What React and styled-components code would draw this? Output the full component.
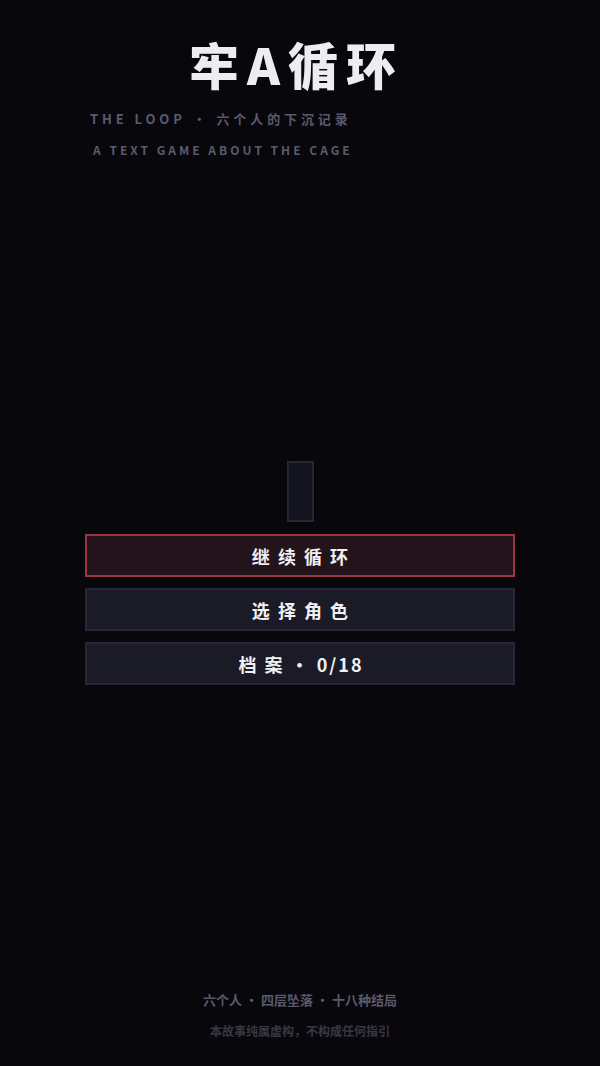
import React from "react";
import styled, { createGlobalStyle } from "styled-components";

const GlobalStyle = createGlobalStyle`
  html, body {
    margin: 0;
    padding: 0;
    background: #08070c;
  }
  body {
    font-family: "Noto Sans CJK SC", "Noto Sans", sans-serif;
  }
`;

const Page = styled.div`
  width: 600px;
  height: 1066px;
  box-sizing: border-box;
  display: flex;
  flex-direction: column;
  background: #08070c;
  color: #ececf2;
  overflow: hidden;
`;

const Header = styled.header`
  padding-top: 32px;
  display: flex;
  flex-direction: column;
`;

const Title = styled.h1`
  margin: 0 0 0 189px;
  font-size: 50px;
  font-weight: 900;
  letter-spacing: 8px;
  line-height: 62px;
  color: #ececf2;
`;

const Sub = styled.div`
  margin-left: ${(p) => p.$indent}px;
  margin-top: ${(p) => p.$top}px;
  font-size: ${(p) => p.$size}px;
  font-weight: 700;
  letter-spacing: ${(p) => p.$spacing}px;
  line-height: 18px;
  color: #5a5a6c;
  white-space: nowrap;
`;

const Middle = styled.main`
  flex: 1;
  display: flex;
  flex-direction: column;
  align-items: center;
  padding-top: 302px;
`;

const Slot = styled.div`
  width: 27px;
  height: 61px;
  box-sizing: border-box;
  border: 2px solid #262634;
  background: #14141e;
  margin-bottom: 12px;
`;

const Menu = styled.nav`
  width: 430px;
  display: flex;
  flex-direction: column;
  gap: 11px;
`;

const MenuButton = styled.button`
  height: 43px;
  box-sizing: border-box;
  border: 2px solid ${(p) => (p.$primary ? "#9c3442" : "#262634")};
  background: ${(p) => (p.$primary ? "#22141a" : "#1b1b27")};
  color: #f0f0f4;
  font-family: "Noto Sans CJK SC", "Noto Sans", sans-serif;
  font-size: 18px;
  font-weight: 700;
  letter-spacing: 2px;
  white-space: pre;
  padding: 0 0 0 2px;
  cursor: pointer;
`;

const Footer = styled.footer`
  display: flex;
  flex-direction: column;
  align-items: center;
  padding-bottom: 26px;
`;

const FootLine = styled.div`
  font-size: ${(p) => p.$size}px;
  font-weight: 700;
  color: ${(p) => p.$color};
  line-height: 18px;
  margin-top: ${(p) => p.$top}px;
`;

export default function App() {
  return (
    <>
      <GlobalStyle />
      <Page>
        <Header>
          <Title>牢A循环</Title>
          <Sub $indent={90} $top={16} $size={13} $spacing={3.9}>
            THE LOOP · 六个人的下沉记录
          </Sub>
          <Sub $indent={93} $top={13} $size={12} $spacing={3.0}>
            A TEXT GAME ABOUT THE CAGE
          </Sub>
        </Header>
        <Middle>
          <Slot />
          <Menu>
            <MenuButton $primary>继 续 循 环</MenuButton>
            <MenuButton>选 择 角 色</MenuButton>
            <MenuButton>档 案 · 0/18</MenuButton>
          </Menu>
        </Middle>
        <Footer>
          <FootLine $size={13} $color="#5a5a6a" $top={0}>
            六个人 · 四层坠落 · 十八种结局
          </FootLine>
          <FootLine $size={12} $color="#383844" $top={13}>
            本故事纯属虚构，不构成任何指引
          </FootLine>
        </Footer>
      </Page>
    </>
  );
}
